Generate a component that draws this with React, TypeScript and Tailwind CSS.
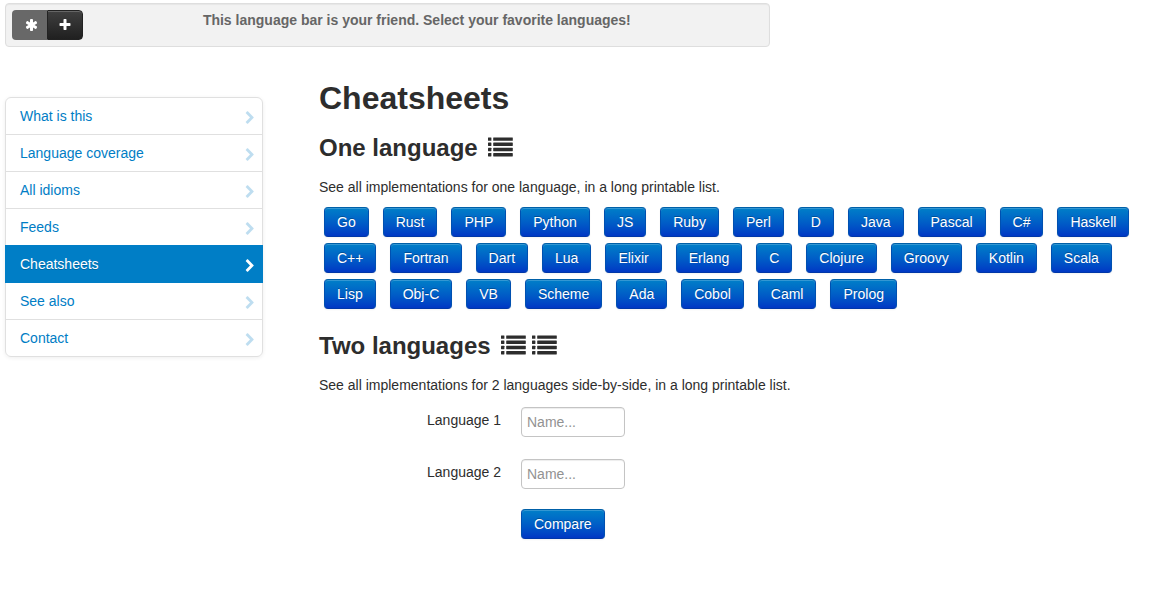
import type { ReactNode } from 'react';

const menu = ['What is this', 'Language coverage', 'All idioms', 'Feeds', 'Cheatsheets', 'See also', 'Contact'];

const languages = [
  'Go', 'Rust', 'PHP', 'Python', 'JS', 'Ruby', 'Perl', 'D', 'Java', 'Pascal', 'C#', 'Haskell',
  'C++', 'Fortran', 'Dart', 'Lua', 'Elixir', 'Erlang', 'C', 'Clojure', 'Groovy', 'Kotlin', 'Scala',
  'Lisp', 'Obj-C', 'VB', 'Scheme', 'Ada', 'Cobol', 'Caml', 'Prolog',
];

const primary =
  'flex h-[30px] items-center rounded-[4px] border border-[#0050b0] border-t-[#0060a8] border-b-[#0037a8] bg-linear-to-b from-[#007fc8] to-[#0037c4] px-3 text-white shadow-[inset_0_1px_0_rgba(255,255,255,0.2),0_1px_2px_rgba(0,0,0,0.05)] [text-shadow:0_-1px_0_rgba(0,0,0,0.25)]';

function Glyph({ d, className = '' }: { d: string; className?: string }) {
  return (
    <svg viewBox="0 0 1792 1792" fill="currentColor" aria-hidden="true" className={`size-3.5 ${className}`}>
      <path d={d} />
    </svg>
  );
}

const asterisk =
  'M1482 1050q46 26 59.5 77.5t-12.5 97.5l-64 110q-26 46-77.5 59.5t-97.5-12.5l-266-153v307q0 52-38 90t-90 38h-128q-52 0-90-38t-38-90v-307l-266 153q-46 26-97.5 12.5t-77.5-59.5l-64-110q-26-46-12.5-97.5t59.5-77.5l266-154-266-154q-46-26-59.5-77.5t12.5-97.5l64-110q26-46 77.5-59.5t97.5 12.5l266 153v-307q0-52 38-90t90-38h128q52 0 90 38t38 90v307l266-153q46-26 97.5-12.5t77.5 59.5l64 110q26 46 12.5 97.5t-59.5 77.5l-266 154z';
const plus =
  'M1600 736v192q0 40-28 68t-68 28h-416v416q0 40-28 68t-68 28h-192q-40 0-68-28t-28-68v-416h-416q-40 0-68-28t-28-68v-192q0-40 28-68t68-28h416v-416q0-40 28-68t68-28h192q40 0 68 28t28 68v416h416q40 0 68 28t28 68z';
const chevron =
  'M1363 877l-742 742q-19 19-45 19t-45-19l-166-166q-19-19-19-45t19-45l531-531-531-531q-19-19-19-45t19-45l166-166q19-19 45-19t45 19l742 742q19 19 19 45t-19 45z';

function ListIcon() {
  return (
    <svg viewBox="0 0 25 20" fill="currentColor" aria-hidden="true" className="h-5 w-[25px]">
      {[0.4, 5.6, 10.8, 16].map((y) => (
        <g key={y}>
          <rect x="0" y={y} width="3.4" height="3.4" rx="0.4" />
          <rect x="5.2" y={y} width="19.6" height="3.4" rx="0.4" />
        </g>
      ))}
    </svg>
  );
}

function Heading({ text, children }: { text: string; children: ReactNode }) {
  return (
    <h2 className="flex items-center gap-2.5 text-[24px] leading-10 font-bold">
      {text}
      <span className="flex gap-1.5 pb-[3px]">{children}</span>
    </h2>
  );
}

function Field({ id, label }: { id: string; label: string }) {
  return (
    <div className="flex items-start gap-5">
      <label htmlFor={id} className="w-[182px] pt-[3px] text-right">{label}</label>
      <input
        id={id}
        type="text"
        placeholder="Name..."
        className="h-[30px] w-[104px] rounded-[4px] border border-[#c4c4c4] bg-white px-[5px] shadow-[inset_0_1px_1px_rgba(0,0,0,0.075)] placeholder:text-[#929292]"
      />
    </div>
  );
}

export default function App() {
  return (
    <div className="min-h-screen bg-white px-[5px] pt-[3px] pb-8 font-['Liberation_Sans',Arial,sans-serif] text-[14px] leading-5 text-[#2d2d2d]">
      <header className="flex w-2/3 items-start rounded-[4px] border border-[#dedede] bg-[#f2f2f2] p-1.5 shadow-[inset_0_1px_1px_rgba(0,0,0,0.05)]">
        <div className="flex">
          <button
            type="button"
            aria-label="All languages"
            className="flex h-[30px] w-[35px] items-center justify-center rounded-l-[4px] bg-[#686868] pl-1 text-white"
          >
            <Glyph d={asterisk} />
          </button>
          <button
            type="button"
            aria-label="Add language"
            className="flex h-[30px] w-9 items-center justify-center rounded-r-[4px] border border-[#222] bg-linear-to-b from-[#404040] to-[#202020] text-white shadow-[inset_0_1px_0_rgba(255,255,255,0.2)]"
          >
            <Glyph d={plus} />
          </button>
        </div>
        <p className="flex-1 pr-3 text-center font-bold text-[#666]">
          This language bar is your friend. Select your favorite languages!
        </p>
      </header>

      <div className="flex items-start gap-14 pt-[31px]">
        <nav className="mt-[19px] w-[258px] shrink-0 rounded-[6px] border border-[#e0e0e0] shadow-[0_1px_4px_rgba(0,0,0,0.065)]">
          <ul className="divide-y divide-[#e0e0e0]">
            {menu.map((item) => {
              const active = item === 'Cheatsheets';
              return (
                <li key={item} className={active ? '-mx-px -mt-px border-[#007ec6] bg-[#007ec6]' : ''}>
                  <a
                    href="#"
                    aria-current={active ? 'page' : undefined}
                    className={
                      active
                        ? 'flex items-center justify-between py-2 pt-[9px] pr-1.5 pl-[15px] text-white [text-shadow:0_1px_0_rgba(0,0,0,0.2)]'
                        : 'flex items-center justify-between py-2 pr-[5px] pl-3.5 text-[#007dc5]'
                    }
                  >
                    {item}
                    <Glyph d={chevron} className={active ? 'mt-1' : 'mt-1 opacity-25'} />
                  </a>
                </li>
              );
            })}
          </ul>
        </nav>

        <main className="min-w-0 flex-1">
          <h1 className="mb-2.5 text-[32px] leading-10 font-bold">Cheatsheets</h1>

          <section className="mb-[17px]">
            <Heading text="One language">
              <ListIcon />
            </Heading>
            <p className="mt-[9px] mb-2.5">See all implementations for one language, in a long printable list.</p>
            <div className="flex flex-wrap gap-x-3.5 gap-y-1.5 pl-[5px]">
              {languages.map((name) => (
                <a key={name} href="#" className={primary}>{name}</a>
              ))}
            </div>
          </section>

          <section>
            <Heading text="Two languages">
              <ListIcon />
              <ListIcon />
            </Heading>
            <p className="mt-[9px] mb-3">See all implementations for 2 languages side-by-side, in a long printable list.</p>
            <form className="flex flex-col" onSubmit={(e) => e.preventDefault()}>
              <div className="flex flex-col gap-[22px]">
                <Field id="lang1" label="Language 1" />
                <Field id="lang2" label="Language 2" />
              </div>
              <div className="flex pt-5 pl-[202px]">
                <button type="submit" className={primary}>Compare</button>
              </div>
            </form>
          </section>
        </main>
      </div>
    </div>
  );
}
